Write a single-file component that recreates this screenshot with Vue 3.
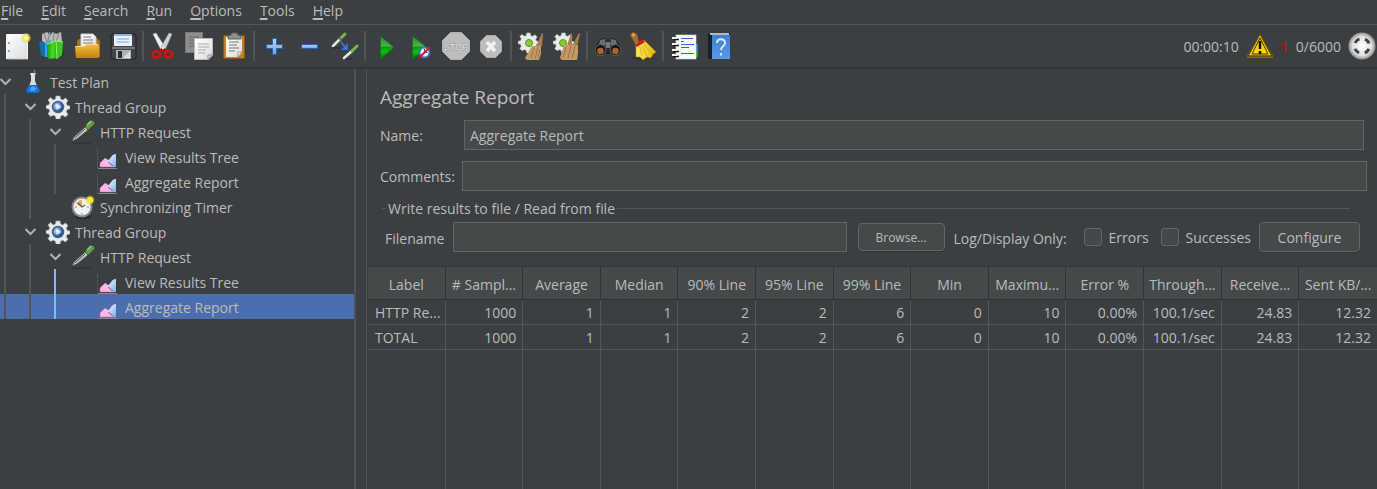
<script setup>
import { ref } from 'vue'

const menus = ['File', 'Edit', 'Search', 'Run', 'Options', 'Tools', 'Help']

const toolGroups = [
  [['new', 'New'], ['templates', 'Templates'], ['open', 'Open'], ['save', 'Save']],
  [['cut', 'Cut'], ['copy', 'Copy'], ['paste', 'Paste']],
  [['plus', 'Expand all'], ['minus', 'Collapse all'], ['toggle', 'Toggle']],
  [['start', 'Start'], ['start-now', 'Start no pauses'], ['stop', 'Stop'], ['shutdown', 'Shutdown']],
  [['clear', 'Clear'], ['clear-all', 'Clear all']],
  [['search', 'Search'], ['broom', 'Reset search']],
  [['functions', 'Function helper'], ['help', 'Help']]
]

const nodes = [
  { depth: 0, icon: 'flask', label: 'Test Plan', open: true },
  { depth: 1, icon: 'gear', label: 'Thread Group', open: true },
  { depth: 2, icon: 'dropper', label: 'HTTP Request', open: true },
  { depth: 3, icon: 'chart', label: 'View Results Tree' },
  { depth: 3, icon: 'chart', label: 'Aggregate Report' },
  { depth: 2, icon: 'timer', label: 'Synchronizing Timer' },
  { depth: 1, icon: 'gear', label: 'Thread Group', open: true },
  { depth: 2, icon: 'dropper', label: 'HTTP Request', open: true },
  { depth: 3, icon: 'chart', label: 'View Results Tree', active: true },
  { depth: 3, icon: 'chart', label: 'Aggregate Report', active: true, selected: true }
]

const columns = ['Label', '# Sampl...', 'Average', 'Median', '90% Line', '95% Line', '99% Line', 'Min', 'Maximu...', 'Error %', 'Through...', 'Receive...', 'Sent KB/...']
const rows = [
  ['HTTP Re...', '1000', '1', '1', '2', '2', '6', '0', '10', '0.00%', '100.1/sec', '24.83', '12.32'],
  ['TOTAL', '1000', '1', '1', '2', '2', '6', '0', '10', '0.00%', '100.1/sec', '24.83', '12.32']
]

const name = ref('Aggregate Report')
const comments = ref('')
const filename = ref('')
const errors = ref(false)
const successes = ref(false)
</script>

<template>
  <div class="app">
    <svg class="defs" aria-hidden="true">
      <defs>
        <linearGradient id="g-paper" x1="0" y1="0" x2="1" y2="1"><stop offset="0" stop-color="#fff" /><stop offset="1" stop-color="#dcdcdc" /></linearGradient>
        <linearGradient id="g-folder" x1="0" y1="0" x2="0" y2="1"><stop offset="0" stop-color="#f0bc4a" /><stop offset="1" stop-color="#c58308" /></linearGradient>
        <linearGradient id="g-play" x1="0" y1="0" x2="0" y2="1"><stop offset="0" stop-color="#1f8a1f" /><stop offset=".42" stop-color="#4fae4f" /><stop offset=".5" stop-color="#0a9a0a" /><stop offset=".7" stop-color="#08c408" /><stop offset="1" stop-color="#067006" /></linearGradient>
        <linearGradient id="g-green" x1="0" y1="0" x2="1" y2="0"><stop offset="0" stop-color="#1f9c12" /><stop offset=".6" stop-color="#4cdc26" /><stop offset="1" stop-color="#24a413" /></linearGradient>
        <linearGradient id="g-blue" x1="0" y1="0" x2="0" y2="1"><stop offset="0" stop-color="#b8d5f6" /><stop offset="1" stop-color="#6ea2e0" /></linearGradient>
        <linearGradient id="g-book" x1="0" y1="0" x2="0" y2="1"><stop offset="0" stop-color="#3f7fcb" /><stop offset="1" stop-color="#5b9ae6" /></linearGradient>
        <linearGradient id="g-yellow" x1="0" y1="0" x2="1" y2="0"><stop offset="0" stop-color="#ffe95a" /><stop offset="1" stop-color="#e2b90e" /></linearGradient>
        <linearGradient id="g-chart" x1="0" y1="0" x2="1" y2="1"><stop offset="0" stop-color="#fff" /><stop offset="1" stop-color="#76aef0" /></linearGradient>
        <radialGradient id="g-sun"><stop offset="0" stop-color="#fffde0" /><stop offset=".5" stop-color="#f4e860" /><stop offset="1" stop-color="#d9ca3c" stop-opacity="0" /></radialGradient>
        <radialGradient id="g-ball"><stop offset="0" stop-color="#fff" /><stop offset=".7" stop-color="#e0e0e0" /><stop offset="1" stop-color="#8e8e8e" /></radialGradient>
        <radialGradient id="g-hub" cx=".4" cy=".4"><stop offset="0" stop-color="#e5f0fb" /><stop offset=".5" stop-color="#7ea9d8" /><stop offset="1" stop-color="#204c88" /></radialGradient>
      </defs>

      <symbol id="new" viewBox="0 0 28 28">
        <rect x="2.500" y="2.500" width="21" height="24" fill="url(#g-paper)" stroke="#f5f5f5" />
        <path d="M3 27h21" stroke="#b5b5b5" />
        <path d="M4 11h2M4 19h2" stroke="#888" stroke-width="1.500" />
        <circle cx="22" cy="6" r="5.500" fill="url(#g-sun)" />
      </symbol>
      <symbol id="templates" viewBox="0 0 28 28">
        <path d="M3 2l5-2 3 3 3-3 3 2 5-2 1 10-7 3-8-1-5-3z" fill="#b9bcbe" />
        <path d="M5 1l3 9M11 0l-2 9M15 1l-1 10M20 1l-3 9" stroke="#8b9093" stroke-width="1.400" />
        <path d="M0 9l6 2v14l-4-2z" fill="#0c6fb5" />
        <path d="M6 11l6-3v17l-6 0z" fill="#35a3e6" />
        <path d="M24 20l3 2-9 5z" fill="#222" opacity=".4" />
        <path d="M8 12l9-3 1 17-8 1-2-3z" fill="url(#g-green)" />
        <path d="M17 9l7 1-1 13-5 4z" fill="#3aca1e" />
        <path d="M17 9l1 18M8 12l9-3 7 1" stroke="#8cf36c" fill="none" />
      </symbol>
      <symbol id="open" viewBox="0 0 28 28">
        <path d="M3 9l2-2h19l2 2v16H3z" fill="#a87318" />
        <path d="M7 2h12l3 3v12H7z" fill="url(#g-paper)" stroke="#ccc" />
        <path d="M9 5h8M9 8h10M9 11h10" stroke="#777" />
        <path d="M1 14h9l3-2h11l1 2v11l-1 1H2z" fill="url(#g-folder)" />
        <path d="M1.500 14.500h9l3-2h10" fill="none" stroke="#ffd980" />
      </symbol>
      <symbol id="save" viewBox="0 0 28 28">
        <path d="M3 2h23l1 1v23l-1 1H3l-1-1V3z" fill="#414346" stroke="#1e1f20" />
        <path d="M3 16h23" stroke="#727578" stroke-width="2" />
        <rect x="5" y="2" width="18" height="12" fill="#e8f1fb" />
        <rect x="5" y="2" width="18" height="2" fill="#86b5ea" />
        <path d="M8 7h12M8 10h12" stroke="#7aa6d5" />
        <rect x="7" y="18" width="15" height="9" fill="#aeb2b5" />
        <rect x="9" y="19" width="4" height="7" fill="#292b2d" />
        <path d="M14 26l7-7v7z" fill="#dedede" />
      </symbol>
      <symbol id="cut" viewBox="0 0 28 28">
        <path d="M3 2l3-1 9 14-4 3z" fill="#f0f0f0" stroke="#aaa" stroke-width=".5" />
        <path d="M22 2l-3-1-8 14 4 3z" fill="#cfd2d3" stroke="#999" stroke-width=".5" />
        <path d="M13 17l-5 3M13 17l5 3" stroke="#b50a0a" stroke-width="3" />
        <ellipse cx="6.500" cy="22.500" rx="3.800" ry="3.300" fill="none" stroke="#d31414" stroke-width="2.600" />
        <ellipse cx="18.500" cy="22.500" rx="3.800" ry="3.300" fill="none" stroke="#d31414" stroke-width="2.600" />
        <circle cx="13" cy="16" r="1.200" fill="#eee" />
      </symbol>
      <symbol id="copy" viewBox="0 0 28 28">
        <rect x=".5" y=".5" width="17" height="20" fill="#8c8e8f" stroke="#777" />
        <path d="M4 5h10M4 8h10M4 11h6M4 14h6" stroke="#666" />
        <path d="M9.500 6.500h18v17l-4 4h-14z" fill="url(#g-paper)" stroke="#bbb" />
        <path d="M13 12h11M13 15h11M13 18h8M13 21h7" stroke="#aaa" />
        <path d="M27 23h-4v4z" fill="#fff" stroke="#888" />
      </symbol>
      <symbol id="paste" viewBox="0 0 28 28">
        <rect x="3.500" y="3.500" width="21" height="23" rx="1" fill="#c17d22" stroke="#8a5411" />
        <path d="M6 5h16v16l-4 4H6z" fill="url(#g-paper)" />
        <path d="M9 10h10M9 13h8M9 16h10M9 19h6" stroke="#777" />
        <path d="M22 20h-4v5z" fill="#fafafa" stroke="#888" stroke-width=".8" />
        <path d="M8 7V4l3-1 1-2h5l1 2 3 1v3z" fill="#8d9091" stroke="#5c5e5f" />
      </symbol>
      <symbol id="plus" viewBox="0 0 28 28">
        <path d="M11.500 6.500h4v6h6v4h-6v6h-4v-6h-6v-4h6z" fill="url(#g-blue)" stroke="#2460ad" />
      </symbol>
      <symbol id="minus" viewBox="0 0 28 28">
        <rect x="5.500" y="12.500" width="16" height="4" fill="url(#g-blue)" stroke="#2460ad" />
      </symbol>
      <symbol id="toggle" viewBox="0 0 28 28">
        <path d="M2 14l8-8" stroke="#e4e6e4" stroke-width="2.600" stroke-linecap="round" />
        <path d="M9 7l5-5" stroke="#78b356" stroke-width="3" stroke-linecap="round" />
        <path d="M8 5l3 3M19 18l3 3" stroke="#45662f" stroke-width="1.200" />
        <path d="M1 16l9 0M12 27h9" stroke="#2e3032" stroke-width="1.500" />
        <path d="M13 26l8-7" stroke="#e4e6e4" stroke-width="2.600" stroke-linecap="round" />
        <path d="M21 19l5-5" stroke="#78b356" stroke-width="3" stroke-linecap="round" />
        <path d="M10 10l4 5" stroke="#3274d6" stroke-width="2" />
        <path d="M17 11v7h-7z" fill="#2f74dc" />
      </symbol>
      <symbol id="start" viewBox="0 0 28 28">
        <path d="M8.500 4L22 15.500 8.500 27z" fill="url(#g-play)" stroke="#137013" stroke-width=".7" />
      </symbol>
      <symbol id="start-now" viewBox="0 0 28 28">
        <path d="M5.500 4L20 15.500 5.500 27z" fill="url(#g-play)" stroke="#137013" stroke-width=".7" />
        <circle cx="17.500" cy="20.500" r="5" fill="#f2f7ff" stroke="#3876c2" stroke-width="2" />
        <path d="M17.500 17v3.500h3" stroke="#346" fill="none" />
        <path d="M12 26L23 15" stroke="#d21818" stroke-width="2" />
      </symbol>
      <symbol id="stop" viewBox="0 0 28 28">
        <path d="M8.500.5h11l8 8v11l-8 8h-11l-8-8v-11z" fill="#bcbcbc" stroke="#b0b0b0" />
      </symbol>
      <symbol id="shutdown" viewBox="0 0 28 28">
        <path d="M9.500 3.500h9l6 6v10l-6 6h-9l-6-6v-10z" fill="#bdbdbd" stroke="#aaa" />
        <path d="M10 10l8 9M18 10l-8 9" stroke="#f2f2f2" stroke-width="3.500" />
      </symbol>
      <symbol id="cog" viewBox="0 0 24 24">
        <path d="M10 1h4l.6 3 2.200.9L19.400 3l2.600 2.600-1.700 2.600.9 2.200 2.800.6v3l-2.800.6-.9 2.200 1.700 2.600-2.600 2.600-2.600-1.700-2.200.9-.6 3h-4l-.6-3-2.200-.9L4.600 21.400 2 18.800l1.700-2.600-.9-2.200L0 13.500v-3l2.800-.6.9-2.200L2 5.100 4.600 2.500l2.600 2.400L9.400 4z" fill="#e9eaeb" stroke="#aaa" stroke-width=".6" />
      </symbol>
      <symbol id="clear" viewBox="0 0 28 28">
        <use href="#cog" x="0" y="0" width="21" height="21" />
        <circle cx="11" cy="11" r="3.500" fill="#86c840" stroke="#5c9426" />
        <path d="M24 1l1 1-1 12-4 2-2-2z" fill="#a87e50" />
        <path d="M14 14l9 0v8l-2 6H9l-2-2z" fill="#c39a66" />
        <path d="M16 16l-3 10M20 15l-3 12M22 18l-2 8" stroke="#9c7444" />
      </symbol>
      <symbol id="clear-all" viewBox="0 0 28 28">
        <use href="#cog" x="0" y="0" width="21" height="21" />
        <circle cx="10" cy="11" r="3.500" fill="#86c840" stroke="#5c9426" />
        <path d="M18 1l1 1 0 12h-5zM26 1l1 1-3 12h-5z" fill="#a87e50" />
        <path d="M11 13l14 0v8l-1 7H9l-2-2z" fill="#c39a66" />
        <path d="M13 15l-3 11M18 14l-3 12M22 14l-3 12" stroke="#9c7444" />
      </symbol>
      <symbol id="search" viewBox="0 0 28 28">
        <path d="M6 7l5-1 2 3h2l2-3 5 1 6 11-2 4H2l-2-4z" fill="#222324" />
        <path d="M6 8l5-1 1 6-8 3zM22 8l-5-1-1 6 8 3z" fill="#6c6d6e" />
        <rect x="12" y="10" width="4" height="6" fill="#777" />
        <circle cx="6.500" cy="18" r="5.500" fill="#181818" stroke="#66686a" />
        <circle cx="21.500" cy="18" r="5.500" fill="#181818" stroke="#66686a" />
        <circle cx="6.500" cy="19" r="3.300" fill="#a3662e" />
        <circle cx="21.500" cy="19" r="3.300" fill="#a3662e" />
      </symbol>
      <symbol id="broom" viewBox="0 0 28 28">
        <ellipse cx="14" cy="26" rx="12" ry="2" fill="#25272a" opacity=".4" />
        <path d="M1 3l3-3 4 2 2 9-3 2z" fill="#a86d2e" />
        <circle cx="4.500" cy="3" r="1.500" fill="#e2ab69" />
        <path d="M7 12l8-4 12 12-3 2-2 4-4-1-4 3-3-3-4 0z" fill="url(#g-yellow)" stroke="#b88f10" stroke-width=".6" />
        <path d="M11 15l2 9M13 14l5 10M15 12l8 10" stroke="#cba516" stroke-width=".8" />
        <path d="M6 13l8-6 2 3-8 5z" fill="#d21d1d" />
      </symbol>
      <symbol id="functions" viewBox="0 0 28 28">
        <rect x="22" y="12" width="6" height="7" fill="#247de1" />
        <rect x="22" y="19" width="6" height="6" fill="#2ba528" />
        <rect x="6" y="3" width="20" height="24" fill="#fbfcff" stroke="#ddd" stroke-width=".6" />
        <path d="M3 7.500h6M3 13.500h6M3 19.500h6M3 24.500h6" stroke="#151515" stroke-width="1.600" />
        <path d="M2 6h5M2 12h5M2 18h5M2 23h5" stroke="#f0f0f0" stroke-width="2" />
        <path d="M11 6.500h12M11 9.500h3M11 12.500h13M11 15.500h8M11 21.500h13" stroke="#2d6fd2" />
      </symbol>
      <symbol id="help" viewBox="0 0 28 28">
        <path d="M3 2l3-1h19v26H5l-2-1z" fill="#17202d" />
        <path d="M7 3h18v24H7z" fill="url(#g-book)" />
        <path d="M5 2h19" stroke="#e8eef5" stroke-width="1.500" />
        <path d="M12 11c0-5 8-5 8 0 0 3-4 3.500-4 7M16 21v2.500" fill="none" stroke="#e2ecf8" stroke-width="1.800" />
      </symbol>
      <symbol id="warning" viewBox="0 0 28 28">
        <path d="M1 23l1-1h24l1 1v3H1z" fill="#8a6f09" />
        <path d="M14 2l12 22H2z" fill="#ffd400" stroke="#5e4d08" stroke-width="1.500" />
        <path d="M14 6l8 16H6z" fill="none" stroke="#333008" stroke-width="1" />
        <path d="M14 9v8M14 19v3" stroke="#121212" stroke-width="2.500" />
      </symbol>
      <symbol id="status" viewBox="0 0 28 28">
        <circle cx="14" cy="14" r="13.500" fill="url(#g-ball)" />
        <circle cx="14" cy="14" r="7.500" fill="none" stroke="#444" stroke-width="3" stroke-dasharray="6 5.780" stroke-dashoffset="-2.900" />
      </symbol>

      <symbol id="flask" viewBox="0 0 24 24">
        <path d="M10 3h4v8l4 10-2 2H8l-2-2 4-10z" fill="#d6dde3" />
        <path d="M8 15h8l3 6-2 2H7l-2-2z" fill="#1673d2" />
        <path d="M9 18l3-2 4 2-2 3H9z" fill="#4aa1f3" />
        <path d="M13.500 0v5" stroke="#777b7e" stroke-width="1.500" />
        <path d="M9 4h6" stroke="#fff" />
        <path d="M5 23.500h14" stroke="#283e5b" />
      </symbol>
      <symbol id="gear" viewBox="0 0 24 24">
        <use href="#cog" width="24" height="24" />
        <circle cx="12" cy="12" r="5.500" fill="url(#g-hub)" stroke="#3d6599" stroke-width="1.500" />
        <path d="M10.500 9l5 3-5 3z" fill="#fff" opacity=".7" />
      </symbol>
      <symbol id="dropper" viewBox="0 0 24 24">
        <path d="M1 23h19" stroke="#292c2e" />
        <path d="M1 21l2-4L14 7l3 3L6 19z" fill="#c8cbc9" stroke="#555" />
        <path d="M4 18L14 9" stroke="#454b4a" />
        <path d="M13 5l5 5" stroke="#38562c" stroke-width="2" />
        <path d="M17 7l4-4" stroke="#5f9e47" stroke-width="4.500" stroke-linecap="round" />
        <path d="M16 5l4-4" stroke="#a4d184" stroke-width="1.500" />
      </symbol>
      <symbol id="chart" viewBox="0 0 24 24">
        <path d="M1.500 4v19" stroke="#666a6c" stroke-dasharray="1 1" />
        <path d="M2 23.500h19" stroke="#85888a" />
        <path d="M4 22v-4l5-5 5 3 5 4v2z" fill="#ffb5e4" stroke="#d75a9e" stroke-width=".5" />
        <path d="M10 17c4-1 5-8 10-8v13l-5-1z" fill="url(#g-chart)" />
        <path d="M12 17l5 4" stroke="#c93e72" />
      </symbol>
      <symbol id="timer" viewBox="0 0 24 24">
        <ellipse cx="12" cy="22" rx="8" ry="2" fill="#26282a" />
        <circle cx="11" cy="12" r="9.500" fill="#f1f0ed" stroke="#8782a0" stroke-width="2" />
        <path d="M11 12V5a7 7 0 0 0-6 4z" fill="#dbb152" />
        <path d="M7 8l4 4 3-2" stroke="#555" fill="none" stroke-width="1.200" />
        <path d="M11 18v2M4 12h2M16 12h2" stroke="#888" />
        <circle cx="19" cy="5" r="5" fill="url(#g-sun)" />
        <circle cx="19" cy="5" r="2.500" fill="#f9ef00" />
      </symbol>
      <symbol id="chevron" viewBox="0 0 12 12">
        <path d="M0.500 3l5 5 5-5" fill="none" stroke="#afb1b3" stroke-width="2" />
      </symbol>
    </svg>

    <nav class="menubar">
      <button v-for="m in menus" :key="m" type="button"><u>{{ m[0] }}</u>{{ m.slice(1) }}</button>
    </nav>

    <header class="toolbar">
      <div v-for="(group, i) in toolGroups" :key="i" class="group">
        <button v-for="[id, title] in group" :key="id" type="button" :aria-label="title">
          <svg>
            <use :href="'#' + id" />
            <text v-if="id === 'stop'" class="sign" x="14" y="18" text-anchor="middle">STOP</text>
          </svg>
        </button>
      </div>
      <div class="status">
        <span>00:00:10</span>
        <svg><use href="#warning" /></svg>
        <span class="count">1</span>
        <span>0/6000</span>
        <svg><use href="#status" /></svg>
      </div>
    </header>

    <div class="body">
      <aside class="tree">
        <div v-for="(n, i) in nodes" :key="i" class="node" :class="{ selected: n.selected }">
          <i v-for="d in n.depth" :key="d" class="guide" :class="{ active: n.active && d === 3 }"></i>
          <span class="toggle"><svg v-if="n.open"><use href="#chevron" /></svg></span>
          <svg class="kind"><use :href="'#' + n.icon" /></svg>
          <span class="label">{{ n.label }}</span>
        </div>
      </aside>

      <main class="panel">
        <div class="form">
          <h1>Aggregate Report</h1>
          <div class="field name">
            <label for="name">Name:</label>
            <input id="name" v-model="name" type="text">
          </div>
          <div class="field comments">
            <label for="comments">Comments:</label>
            <input id="comments" v-model="comments" type="text">
          </div>
          <fieldset>
            <legend>Write results to file / Read from file</legend>
            <div class="file">
              <label for="filename">Filename</label>
              <input id="filename" v-model="filename" type="text">
              <button type="button" class="browse">Browse...</button>
              <span class="only">Log/Display Only:</span>
              <label class="check"><input v-model="errors" type="checkbox"><span>Errors</span></label>
              <label class="check"><input v-model="successes" type="checkbox"><span>Successes</span></label>
              <button type="button" class="configure">Configure</button>
            </div>
          </fieldset>
        </div>

        <div class="results">
          <table>
            <thead>
              <tr><th v-for="c in columns" :key="c">{{ c }}</th></tr>
            </thead>
            <tbody>
              <tr v-for="r in rows" :key="r[0]"><td v-for="(v, i) in r" :key="i">{{ v }}</td></tr>
              <tr class="rest"><td v-for="c in columns" :key="c"></td></tr>
            </tbody>
          </table>
        </div>
      </main>
    </div>
  </div>
</template>

<style>
body { margin: 0; background: #3c3f41; }
</style>

<style scoped>
.app {
  display: flex;
  flex-direction: column;
  height: 100vh;
  overflow: hidden;
  background: #3c3f41;
  color: #bbbbbb;
  font: 14px/20px "Open Sans", "Noto Sans", sans-serif;
}
.app * { box-sizing: border-box; }
.defs { display: block; width: 0; height: 0; }
button, input { font: inherit; color: inherit; }

.menubar {
  display: flex;
  align-items: flex-start;
  gap: 18px;
  height: 25px;
  flex: none;
  padding: 0 1px;
  border-bottom: 1px solid #555555;
}
.menubar button { padding: 0; border: 0; background: none; line-height: 22px; }
.menubar u { text-decoration-thickness: 2px; text-underline-offset: 2px; }

.toolbar {
  display: flex;
  align-items: center;
  height: 44px;
  flex: none;
  border-bottom: 2px solid #333638;
}
.group { display: flex; align-items: center; }
.group + .group::before {
  content: "";
  width: 2px;
  height: 30px;
  margin: 0 2px;
  background: #515456;
}
.group button {
  display: flex;
  align-items: center;
  justify-content: center;
  width: 35px;
  height: 36px;
  padding: 0;
  border: 0;
  background: none;
}
.toolbar svg { width: 28px; height: 28px; }
.sign { font: 9px "Liberation Sans", sans-serif; fill: #e4e4e4; stroke: #989898; stroke-width: 1px; paint-order: stroke; }
.status { display: flex; align-items: center; gap: 7px; margin-left: auto; padding-right: 1px; }
.status span { padding-top: 2px; }
.status .count { color: #e80000; }

.body { display: flex; flex: 1; min-height: 0; }
.tree { flex: 0 0 356px; border-right: 2px solid #515151; }
.node { display: flex; align-items: center; height: 25px; white-space: nowrap; }
.node .label { padding-top: 2px; }
.node.selected { background: #4b6eaf; }
.guide { flex: none; width: 25px; height: 25px; padding-left: 4px; }
.guide::before { content: ""; display: block; width: 2px; height: 25px; background: #555555; }
.guide.active::before { background: #7cbcf8; }
.toggle { flex: none; width: 21px; height: 12px; }
.toggle svg { display: block; width: 12px; height: 12px; }
.kind { flex: none; width: 24px; height: 24px; margin-right: 5px; }

.panel {
  display: flex;
  flex-direction: column;
  flex: 1;
  min-width: 0;
  margin-left: 10px;
  border-left: 1px solid #555555;
}
.form { padding: 14px 10px 14px 13px; }
h1 { margin: 0; font-size: 19px; font-weight: 400; line-height: 28px; }
.field { display: flex; align-items: center; }
.field label { padding-top: 2px; }
.name { margin: 9px 3px 0 0; }
.name label { width: 84px; }
.comments { margin-top: 11px; }
.comments label { width: 82px; }
input[type="text"] {
  flex: 1;
  min-width: 0;
  height: 30px;
  padding: 0 5px;
  border: 1px solid #646464;
  border-radius: 0;
  background: #45494a;
  outline: 0;
}
fieldset { min-width: 0; margin: 7px 17px 0 2px; padding: 0; border: 0; border-top: 1px solid #555555; }
legend { margin-left: 4px; padding: 1px 2px 0; line-height: 19px; }
.file { display: flex; align-items: center; margin: 4px -10px 0 3px; }
.file > label[for] { width: 68px; padding-top: 3px; }
.file button {
  border: 1px solid #646464;
  border-radius: 4px;
  background: #45494a;
  padding: 2px 0 0;
  box-shadow: 0 1px 0 #333638;
}
.file .browse { width: 87px; height: 28px; margin: 0 9px 0 11px; font-size: 12px; }
.file .configure { width: 101px; height: 30px; margin-left: 8px; }
.only { width: 118px; padding-top: 3px; white-space: nowrap; }
.check { display: flex; align-items: center; margin-left: 12px; }
.check span { padding-top: 2px; }
input[type="checkbox"] {
  appearance: none;
  width: 18px;
  height: 18px;
  margin: 0 7px 0 0;
  border: 1px solid #646464;
  border-radius: 3px;
  background: #43494a;
}

.results { flex: 1; min-height: 0; padding-left: 1px; }
table { width: 100%; height: 100%; table-layout: fixed; border-collapse: separate; border-spacing: 0; }
th, td { overflow: hidden; white-space: nowrap; padding: 2px 6px 0 7px; border-right: 1px solid #555555; }
th {
  height: 34px;
  padding: 3px 0 0;
  background: #45494a;
  border: solid #323537;
  border-width: 1px 1px 1px 0;
  font-weight: 400;
  text-align: center;
}
td { height: 25px; border-bottom: 1px solid #555555; text-align: right; }
td:first-child { text-align: left; }
th:last-child, td:last-child { border-right: 0; }
.rest td { height: auto; border-bottom: 0; }
</style>
